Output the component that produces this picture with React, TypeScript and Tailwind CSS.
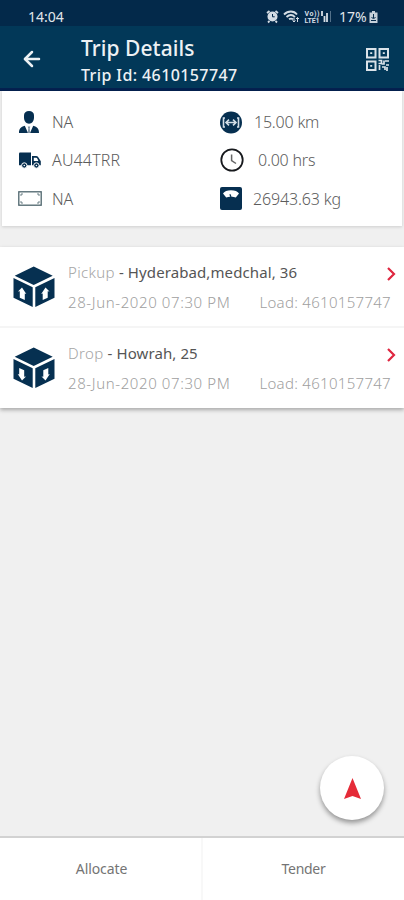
import React from 'react';
import { ArrowLeft } from 'lucide-react';

const DriverIcon = () => (
  <svg width="20" height="22" viewBox="0 0 20 22" fill="#062f50">
    <path d="M10 0C7 0 5 1.6 5 4.6v2.2c0 3 2.2 6 5 6s5-3 5-6V4.6C15 1.6 13 0 10 0z" />
    <path d="M0 22c0-4 1.6-6 5.8-7.2L9 22zM20 22c0-4-1.6-6-5.8-7.2L11 22z" />
    <path d="M8.7 15.4h2.6l-.6 2 .6 4.6H8.7l.6-4.6z" fill="#8496a6" />
  </svg>
);

const TruckIcon = () => (
  <svg width="22" height="17" viewBox="0 0 22 17" fill="#062f50">
    <path d="M0 1.5Q0 .5 1 .5h11v12.7H0z" />
    <path d="M13 4h4.2Q19 4 19.8 6l2 3.2v4H13z" />
    <path d="M14.8 5.8h2.4q.8 0 1.200 1l1 2.200h-4.600z" fill="#fff" />
    <circle cx="5.3" cy="13.5" r="2.7" stroke="#fff" />
    <circle cx="17.4" cy="13.5" r="2.7" stroke="#fff" />
    <circle cx="5.3" cy="13.5" r=".8" fill="#fff" />
    <circle cx="17.4" cy="13.5" r=".8" fill="#fff" />
  </svg>
);

const ContainerIcon = () => (
  <svg width="24" height="15" viewBox="0 0 24 15" fill="none" stroke="#4d646c">
    <rect x=".8" y=".8" width="22.4" height="13.4" strokeWidth="1.3" />
    <path d="M3 5V3h2M19 3h2v2M3 10v2h2M19 12h2v-2" strokeWidth=".8" />
  </svg>
);

const DistanceIcon = () => (
  <svg width="22" height="23" viewBox="0 0 22 23" fill="none">
    <circle cx="11" cy="11.5" r="11" fill="#062f50" />
    <path d="M5 7H3.500v9H5M17 7h1.500v9H17M6 11.500h10M9 8.600l-3 2.900 3 2.900M13 8.600l3 2.900-3 2.900" stroke="#d3dee7" strokeWidth="1.6" />
  </svg>
);

const ClockIcon = () => (
  <svg width="24" height="24" viewBox="0 0 24 24" fill="none">
    <circle cx="12" cy="12" r="10.7" stroke="#17191d" strokeWidth="1.8" />
    <path d="M11.600 6.500v6l4.400 3" stroke="#666" strokeWidth="1.5" />
  </svg>
);

const ScaleIcon = () => (
  <svg width="22" height="23" viewBox="0 0 22 23">
    <rect width="22" height="23" rx="2" fill="#062f50" />
    <path d="M3 6.500C5 2 17 2 19 6.500l-3.200 4c-2-1-7.600-1-9.600 0z" fill="#fff" />
    <path d="M11 10 9.900 7.200" stroke="#062f50" strokeWidth="1.2" />
  </svg>
);

const QrIcon = () => (
  <svg width="23" height="23" viewBox="0 0 23 23" fill="none" stroke="#dbe3e9" strokeWidth="2">
    <path d="M1 1h8.5v8.5H1zM13.5 1H22v8.5h-8.5zM1 13.5h8.5V22H1z" />
    <path d="M4.2 5.2h2M16.8 5.2h2M4.2 17.8h2M12.5 12.5h3v3h-3M18 12.5v3.5h-2.5M19 13h4M20 17h3M13.5 17v5M16 19h3v3M21 19v4" strokeWidth="1.7" />
  </svg>
);

const BoxIcon = ({ down }: { down?: boolean }) => (
  <svg width="42" height="42" viewBox="0 0 42 42" fill="#063051">
    <path d="M20.7.5 39.7 9.7 20.7 19 1.7 9.7z" />
    <path d="M.5 12 19.7 21.2V41L.5 31.800zM41.5 12 22.300 21.200V41l19.200-9.200z" />
    <path d="m9 21.600 4.300 6.400-1.500-.5v6.500l-5-2.300v-6.500l-1.800.3z" fill="#fff" transform={down ? 'rotate(180 9 27.5)' : undefined} />
    <path d="m32.500 21.600-4.300 6.400 1.500-.5v6.500l5-2.300v-6.500l1.800.3z" fill="#fff" transform={down ? 'rotate(180 32.5 27.5)' : undefined} />
  </svg>
);

const StatusIcons = () => (
  <svg width="66" height="15" viewBox="0 0 66 15" fill="none" stroke="#d5dde5">
    <circle cx="6.500" cy="7.500" r="4.300" fill="#d5dde5" strokeWidth="1.500" />
    <path d="M1 4l2.500-2M12 4 9.500 2M2 13.500l1.500-1.500M11 13.500l-1.500-1.500" strokeWidth="1.8" />
    <path d="M6.500 5v2.800h2.200" stroke="#03294a" />
    <path d="M18 5.500c4-4 10-4 13 0M20.500 8c3-2.700 6-2.600 8.500 0M23 10.300q2-1.500 4 0" strokeWidth="1.8" />
    <path d="M28 8.500V13M26.500 11.500 28 13l1.500-1.500M31.500 13V8.500M30 10l1.500-1.500L33 10" />
    <text x="38.5" y="7" fontSize="7" fontWeight="700" fontFamily="Roboto, sans-serif" fill="#d5dde5" stroke="none" textLength="15">Vo))</text>
    <text x="38.5" y="13.5" fontSize="7" fontWeight="700" fontFamily="Roboto, sans-serif" fill="#d5dde5" stroke="none" textLength="15">LTE1</text>
    <path d="M56 2v5M58.500 13V7M61 13V4" strokeWidth="1.8" />
    <path d="M64.500 2v11" stroke="#54718a" />
  </svg>
);

const summary = [
  { icon: DriverIcon, text: 'NA', style: 'ml-[17px] w-[33px]', track: 'tracking-[-0.2px]' },
  { icon: DistanceIcon, text: '15.00 km', style: 'ml-[18px] w-[34px]', track: 'tracking-[-0.2px]' },
  { icon: TruckIcon, text: 'AU44TRR', style: 'ml-[17px] w-[33px]', track: 'tracking-[0.15px]' },
  { icon: ClockIcon, text: '0.00 hrs', style: 'ml-[18px] w-[38px]', track: 'tracking-[-0.2px]' },
  { icon: ContainerIcon, text: 'NA', style: 'ml-[16px] w-[34px]', track: 'tracking-[-0.2px]' },
  { icon: ScaleIcon, text: '26943.63 kg', style: 'ml-[18px] w-[33px]', track: 'tracking-[-0.15px]' },
];

const stops = [
  { kind: 'Pickup', place: 'Hyderabad,medchal, 36', down: false },
  { kind: 'Drop', place: 'Howrah, 25', down: true },
];

const App: React.FC = () => {
  return (
    <div className="relative flex h-[900px] w-[404px] flex-col overflow-hidden bg-[#f0f0f0] font-['Noto_Sans',sans-serif] whitespace-nowrap">
      <div className="flex h-[26px] items-center bg-[#03294a] pt-[7px] text-[#e1e6eb]">
        <span className="ml-[28px] w-[238px] text-[14px]">14:04</span>
        <StatusIcons />
        <span className="ml-[7px] text-[14px]">17%</span>
        <svg className="ml-[2px]" width="9" height="12" viewBox="0 0 9 12" fill="#c5d0da">
          <path d="M3 0h3v1.500h2.500V12h-8V1.500H3z" />
          <path d="M4.500 3v4M2.500 6l2 2 2-2M2 9.500h5" stroke="#03294a" fill="none" />
        </svg>
      </div>

      <div className="flex h-[65px] border-b-[3px] border-[#04204f] bg-[#023858] text-[#edf1f4]">
        <ArrowLeft className="mt-[21px] ml-[20px] h-6 w-6" strokeWidth={2.5} />
        <div className="ml-[37px] flex-1">
          <div className="mt-[8px] h-[29px] text-[21px] leading-[28px] font-medium tracking-[0.05px]">Trip Details</div>
          <div className="text-[16px] leading-[24px] font-medium tracking-[0.4px]">Trip Id: 4610157747</div>
        </div>
        <span className="mt-[22px] mr-[15px]"><QrIcon /></span>
      </div>

      <div className="mx-[2px] grid h-[135px] grid-cols-2 content-start bg-white pt-[12px] text-[16px] font-light text-[#5c5c5c] shadow-[0_1px_3px_rgba(0,0,0,0.14)]">
        {summary.map(({ icon: Icon, text, style, track }, index) => (
          <div key={index} className="flex h-[38.3px] items-center">
            <span className={style}><Icon /></span>
            <span className={track}>{text}</span>
          </div>
        ))}
      </div>

      <div className="mt-[21px] h-[161px] bg-white font-light shadow-[0_2px_4px_rgba(0,0,0,0.3)]">
        {stops.map((stop) => (
          <div key={stop.kind} className="flex h-[81px] border-b-2 border-[#f5f5f5] last:border-0">
            <span className="mt-[19px] ml-[13px] w-[55px]"><BoxIcon down={stop.down} /></span>
            <div className="flex-1 pt-[11px]">
              <div className="flex h-[29px] items-center justify-between">
                <span className="text-[15px] font-normal tracking-[0.1px] text-[#555]">
                  <span className="font-light tracking-[0.35px] text-[#a5a5a5]">{stop.kind}</span> - {stop.place}
                </span>
                <svg className="mt-[2px] mr-[8px]" width="9" height="14" viewBox="0 0 9 14" fill="none" stroke="#df2740" strokeWidth="2.2">
                  <path d="m1 1 6 6-6 6" />
                </svg>
              </div>
              <div className="flex h-[30px] items-center justify-between pr-[13px] text-[15px] text-[#a0a0a0]">
                <span className="tracking-[0.6px]">28-Jun-2020 07:30 PM</span>
                <span className="tracking-[0.3px]">Load: 4610157747</span>
              </div>
            </div>
          </div>
        ))}
      </div>

      <div className="flex flex-1 items-end justify-end pr-[20px] pb-[16px]">
        <button className="flex h-[64px] w-[64px] items-center justify-center rounded-full bg-white shadow-[0_3px_5px_rgba(0,0,0,0.38)]">
          <svg className="mt-[2px]" width="17" height="22" viewBox="0 0 17 22" fill="#e52b38">
            <path d="M8.5 0 17 21l-8.500-3L0 21z" />
          </svg>
        </button>
      </div>

      <div className="flex h-[64px] border-t-2 border-[#d2d2d2] bg-white text-[14px] text-[#747474]">
        <button className="flex w-[203px] items-center justify-center border-r-2 border-[#f8f8f8] pb-px pl-[2px] tracking-[-0.1px]">Allocate</button>
        <button className="flex flex-1 items-center justify-center pb-px tracking-[-0.3px]">Tender</button>
      </div>
    </div>
  );
};

export default App;
